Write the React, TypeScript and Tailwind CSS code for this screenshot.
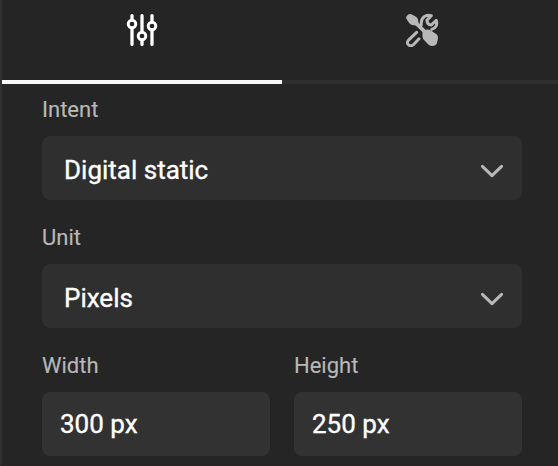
import React from "react";

function SlidersIcon() {
  return (
    <svg width="32" height="34" viewBox="126 13 32 34" fill="none" stroke="#fff" strokeLinecap="round">
      <path strokeWidth="3.3" d="M132 15.6V19M132 29V44.4M142 15.6V31M142 41V44.4M152 15.6V21M152 31V44.4" />
      <g strokeWidth="2.9">
        <circle cx="132" cy="24" r="3.8" />
        <circle cx="142" cy="36" r="3.8" />
        <circle cx="152" cy="26" r="3.8" />
      </g>
    </svg>
  );
}

function ToolsIcon() {
  return (
    <svg width="34" height="34" viewBox="405 13 34 34" fill="none">
      <path d="M406.5 19Q405.4 17.2 406.8 15.9L408.3 14.6Q409.8 13.4 411.4 14.3L416 16.8Q417.7 17.9 418 19.8L418.5 22.7L426 30.2L423.4 33L415.7 25.4L412.2 25Q410.2 24.6 409.2 23Z" fill="#b8b8b8" />
      <path d="M422.4 34.5Q421.9 31.9 423.8 30.8L426.2 29.7Q428.5 29.3 430.8 30.4L436.9 34.6Q438.4 36.2 437.9 39L436.8 43.4Q436 45.4 434 45.8L431.5 46Q429.7 45.9 428.3 44.5L423.3 39.2Q422.2 37.8 422.4 34.5Z" fill="#b8b8b8" />
      <path d="M416.6 32.4L408.8 39.8C404.8 43.8 410.3 47.8 413.9 44.2L419 38.8" stroke="#b8b8b8" strokeWidth="3" strokeLinecap="round" />
      <path d="M421.3 24.5C420.5 18 425.8 13.8 431.3 15.7L426.9 20.3Q427.2 24.5 431.3 25L436.2 20.3C437.8 24.8 435.7 28.2 431.8 29.4" stroke="#b8b8b8" strokeWidth="3" strokeLinecap="round" strokeLinejoin="round" />
    </svg>
  );
}

function Chevron() {
  return (
    <svg className="mt-0.5" width="24" height="14" viewBox="0 0 24 14" fill="none" stroke="#b8b8b8" strokeWidth="3" strokeLinecap="round" strokeLinejoin="round">
      <path d="M2.4 2.4L12 11.6L21.6 2.4" />
    </svg>
  );
}

function Label({ children }: { children: React.ReactNode }) {
  return (
    <div className="h-[52px] pt-[12px] text-[22px] leading-[28px] text-[#b8b8b8] [-webkit-text-stroke:0.15px]">{children}</div>
  );
}

function SelectField({ label, value }: { label: string; value: string }) {
  return (
    <div className="mb-3">
      <Label>{label}</Label>
      <button className="flex h-16 w-full items-center justify-between rounded-lg bg-[#2f2f2f] pl-[22px] pr-[18px] pt-1 text-[26px] leading-[30px] text-white [-webkit-text-stroke:0.35px]">
        <span>{value}</span>
        <Chevron />
      </button>
    </div>
  );
}

function SizeField({ label, value }: { label: string; value: string }) {
  return (
    <div className="flex-1">
      <Label>{label}</Label>
      <div className="flex h-16 items-center rounded-lg bg-[#323232] pl-[18px] text-[26px] leading-[30px] text-white [-webkit-text-stroke:0.35px]">{value}</div>
    </div>
  );
}

export default function App() {
  return (
    <div className="h-[466px] w-[558px] overflow-hidden border-b border-l-2 border-b-[#2a2024] border-l-[#303030] bg-[#252525] font-['Roboto',sans-serif]">
      <nav className="flex h-[84px]">
        <button className="flex w-[280px] justify-center border-b-4 border-[#f8f8f8] pt-[13px]">
          <SlidersIcon />
        </button>
        <button className="flex flex-1 border-b-4 border-[#2f2f2f] pl-[123px] pt-[13px]">
          <ToolsIcon />
        </button>
      </nav>
      <main className="pl-10 pr-9">
        <SelectField label="Intent" value="Digital static" />
        <SelectField label="Unit" value="Pixels" />
        <div className="flex gap-6">
          <SizeField label="Width" value="300 px" />
          <SizeField label="Height" value="250 px" />
        </div>
      </main>
    </div>
  );
}
